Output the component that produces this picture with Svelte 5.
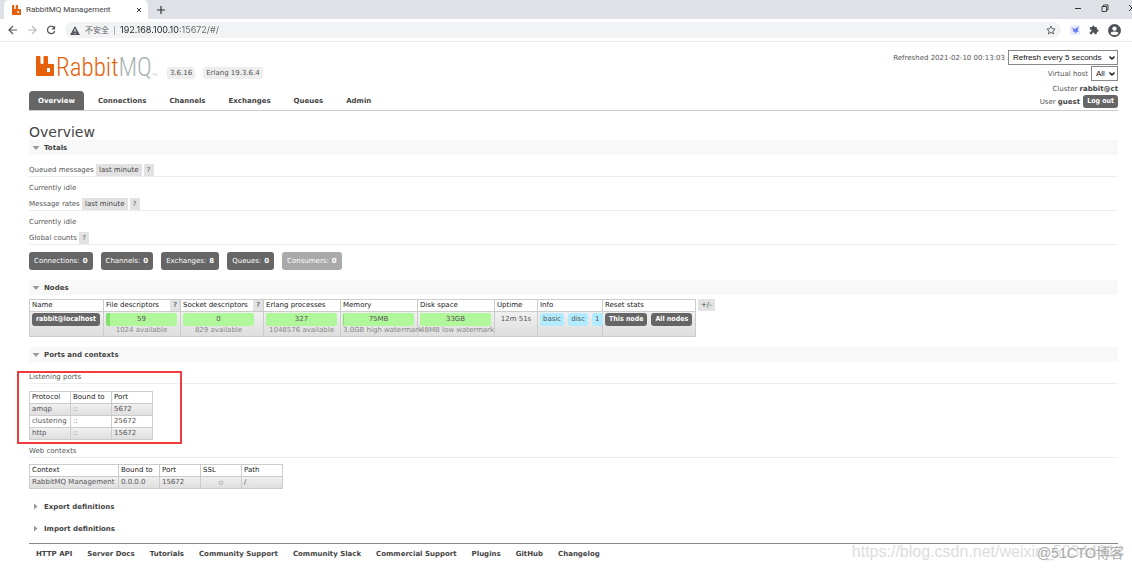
<script lang="ts">
	const navItems = ['Overview', 'Connections', 'Channels', 'Exchanges', 'Queues', 'Admin'];
	const footerLinks = ['HTTP API', 'Server Docs', 'Tutorials', 'Community Support', 'Community Slack', 'Commercial Support', 'Plugins', 'GitHub', 'Changelog'];

	const counts = [
		{ label: 'Connections', value: 0 },
		{ label: 'Channels', value: 0 },
		{ label: 'Exchanges', value: 8 },
		{ label: 'Queues', value: 0 },
		{ label: 'Consumers', value: 0, disabled: true }
	];

	const gauges = [
		{ value: '59', note: '1024 available', used: 6 },
		{ value: '0', note: '829 available', used: 0 },
		{ value: '327', note: '1048576 available', used: 0 },
		{ value: '75MB', note: '3.0GB high watermark', used: 2 },
		{ value: '33GB', note: '48MB low watermark', used: 0 }
	];

	const ports = [
		{ protocol: 'amqp', bound: '::', port: 5672 },
		{ protocol: 'clustering', bound: '::', port: 25672 },
		{ protocol: 'http', bound: '::', port: 15672 }
	];

	let url = $state('192.168.100.10:15672/#/');
	let activeTab = $state('Overview');
	let open = $state({ totals: true, nodes: true, ports: true, exportDefs: false, importDefs: false });
</script>

{#snippet rabbit(cls: string)}
	<svg class={cls} viewBox="0 0 18 20" aria-hidden="true">
		<path fill="#e6600a" d="M0 1q0-1 1-1h2.500q1 0 1 1v6q0 1 1 1h1q1 0 1-1V1q0-1 1-1h2.500q1 0 1 1v6q0 1 1 1h4q1 0 1 1v10q0 1-1 1H1q-1 0-1-1zM11 12v4h3v-4z" fill-rule="evenodd" />
	</svg>
{/snippet}

{#snippet sectionHead(key: keyof typeof open, title: string)}
	<h2 class:closed={!open[key]}>
		<button aria-expanded={open[key]} onclick={() => (open[key] = !open[key])}>
			<svg width="8" height="8" viewBox="0 0 8 8" aria-hidden="true">
				<path fill="#999" d={open[key] ? 'M.5 2h7L4 6z' : 'M2 .5v6L5.500 3.500z'} />
			</svg>
			{title}
		</button>
	</h2>
{/snippet}

<div class="browser">
	<div class="tabstrip">
		<div class="tab">
			{@render rabbit('favicon')}
			<span class="tab-title">RabbitMQ Management</span>
			<button class="icon" aria-label="Close tab">
				<svg width="6" height="6" viewBox="0 0 6 6" stroke="#333" fill="none"><path d="M1 1l4 4M5 1L1 5" /></svg>
			</button>
		</div>
		<button class="icon new-tab" aria-label="New tab">
			<svg width="8" height="8" viewBox="0 0 8 8" stroke="#333" stroke-width="1.2" fill="none"><path d="M4 0v8M0 4h8" /></svg>
		</button>
		<div class="window-buttons">
			<button class="icon" aria-label="Minimize">
				<svg width="8" height="8" viewBox="0 0 8 8" stroke="#333" fill="none"><path d="M1 4.5h6" /></svg>
			</button>
			<button class="icon" aria-label="Restore">
				<svg width="8" height="8" viewBox="0 0 8 8" stroke="#333" stroke-width=".9" fill="none"><path d="M1 2.5h4.5v5H1zM2.5 2.5V1H7v5H5.5" /></svg>
			</button>
			<button class="icon" aria-label="Close">
				<svg width="8" height="8" viewBox="0 0 8 8" stroke="#333" fill="none"><path d="M1 1l6 6M7 1L1 7" /></svg>
			</button>
		</div>
	</div>

	<div class="toolbar">
		<button class="icon" aria-label="Back">
			<svg width="10" height="10" viewBox="0 0 10 10" stroke="#55585c" stroke-width="1.2" fill="none"><path d="M9 5H1.500M5 1L1 5l4 4" /></svg>
		</button>
		<button class="icon" aria-label="Forward">
			<svg width="10" height="10" viewBox="0 0 10 10" stroke="#bbb" stroke-width="1.2" fill="none"><path d="M1 5h7.500M5 1l4 4-4 4" /></svg>
		</button>
		<button class="icon" aria-label="Reload">
			<svg width="10" height="10" viewBox="0 0 10 10" fill="none"><path stroke="#55585c" stroke-width="1.3" d="M8 2.500A3.700 3.700 0 1 0 8.700 6" /><path fill="#55585c" d="M9.200.6v3.800H5.400z" /></svg>
		</button>
		<div class="address">
			<svg width="10" height="9" viewBox="0 0 10 9" aria-hidden="true"><path fill="#55585c" d="M5 0l5 9H0z" /><path stroke="#fff" d="M5 3v3M5 7v1" /></svg>
			<label for="url">不安全</label>
			<span class="bar"></span>
			<input id="url" type="text" spellcheck="false" bind:value={url} />
			<button class="icon" aria-label="Bookmark this page">
				<svg width="10" height="10" viewBox="0 0 24 24" fill="none" stroke="#55585c" stroke-width="2.200"><path d="M12 2.500l2.900 6.500 7 .7-5.300 4.700 1.600 6.900L12 17.700l-6.200 3.600 1.600-6.900L2.100 9.700l7-.7z" /></svg>
			</button>
		</div>
		<button class="icon" aria-label="Extension">
			<svg width="10" height="10" viewBox="0 0 10 10"><rect width="10" height="10" rx="1" fill="#e9ebff" /><path fill="#6c7df0" d="M1.500 2.500l3.500 1.500L8.500 1.500 7.800 5.500l1 1-2 .5L5.500 8.500 4.500 6.800 2.500 6.200 3.500 5z" /></svg>
		</button>
		<button class="icon" aria-label="Extensions">
			<svg width="10" height="10" viewBox="0 0 24 24"><path fill="#4d5156" d="M20.500 11H19V7c0-1.100-.9-2-2-2h-4V3.500a2.500 2.500 0 0 0-5 0V5H4c-1.100 0-2 .9-2 2v3.800h1.500a2.700 2.700 0 0 1 0 5.400H2V20c0 1.100.9 2 2 2h3.800v-1.500a2.700 2.700 0 0 1 5.400 0V22H17c1.100 0 2-.9 2-2v-4h1.500a2.500 2.500 0 0 0 0-5z" /></svg>
		</button>
		<button class="icon" aria-label="Profile">
			<svg width="13" height="13" viewBox="0 0 24 24"><circle cx="12" cy="12" r="12" fill="#4d5156" /><circle cx="12" cy="8.500" r="4" fill="#fff" /><path fill="#fff" d="M4.500 17.500c0-5 15-5 15 0-3.500 4-11.500 4-15 0z" /></svg>
		</button>
	</div>
</div>

<div class="page">
	<header>
		<div class="left">
			<div class="brand">
				<a class="logo" href="#/" aria-label="RabbitMQ">
					{@render rabbit('logo-mark')}
					<span>Rabbit<i>MQ</i><small>TM</small></span>
				</a>
				<span class="version">3.6.16</span>
				<span class="version">Erlang 19.3.6.4</span>
			</div>
			<nav>
				{#each navItems as item}
					<a href="#/{item.toLowerCase()}" class:selected={activeTab === item} onclick={() => (activeTab = item)}>{item}</a>
				{/each}
			</nav>
		</div>

		<div class="status">
			<div class="row tall">
				<label for="refresh">Refreshed 2021-02-10 00:13:03</label>
				<span class="select wide">
					<select id="refresh"><option>Refresh every 5 seconds</option><option>Refresh every 30 seconds</option><option>Do not refresh</option></select>
					<svg width="6" height="4" viewBox="0 0 6 4" fill="none" stroke="#111" stroke-width="1.400"><path d="M.5.5L3 3 5.500.5" /></svg>
				</span>
			</div>
			<div class="row tall">
				<label for="vhost">Virtual host</label>
				<span class="select">
					<select id="vhost"><option>All</option><option>/</option></select>
					<svg width="6" height="4" viewBox="0 0 6 4" fill="none" stroke="#111" stroke-width="1.400"><path d="M.5.5L3 3 5.500.5" /></svg>
				</span>
			</div>
			<div class="row"><span>Cluster <b>rabbit@ct</b></span></div>
			<div class="row">
				<span>User <b>guest</b></span>
				<button class="dark">Log out</button>
			</div>
		</div>
	</header>

	<main>
		<h1>Overview</h1>

		<section>
			{@render sectionHead('totals', 'Totals')}
			{#if open.totals}
				<div class="body">
					<h3>Queued messages <button class="chip range">last minute</button> <button class="chip">?</button></h3>
					<p>Currently idle</p>
					<h3>Message rates <button class="chip range">last minute</button> <button class="chip">?</button></h3>
					<p>Currently idle</p>
					<h3>Global counts <button class="chip">?</button></h3>
					<div class="counts">
						{#each counts as c}
							<a href="#/{c.label.toLowerCase()}" class:disabled={c.disabled}>{c.label}: <b>{c.value}</b></a>
						{/each}
					</div>
				</div>
			{/if}
		</section>

		<section>
			{@render sectionHead('nodes', 'Nodes')}
			{#if open.nodes}
				<div class="nodes">
					<table class="node-table">
						<colgroup>
							<col class="name" /><col class="gauge" /><col class="socket" /><col class="gauge" /><col class="gauge" /><col class="gauge" /><col class="uptime" /><col class="info" /><col class="reset" />
						</colgroup>
						<thead>
							<tr>
								<th>Name</th>
								<th><span class="split">File descriptors <button class="chip">?</button></span></th>
								<th><span class="split">Socket descriptors <button class="chip">?</button></span></th>
								<th>Erlang processes</th>
								<th>Memory</th>
								<th>Disk space</th>
								<th>Uptime</th>
								<th>Info</th>
								<th>Reset stats</th>
							</tr>
						</thead>
						<tbody>
							<tr>
								<td><a class="dark" href="#/nodes/rabbit">rabbit@localhost</a></td>
								{#each gauges as g}
									<td>
										<div class="meter"><div class="used" style="width: {g.used}%"></div><span>{g.value}</span></div>
										<div class="note">{g.note}</div>
									</td>
								{/each}
								<td class="center">12m 51s</td>
								<td><div class="group"><abbr>basic</abbr><abbr>disc</abbr><abbr>1</abbr></div></td>
								<td><div class="group"><button class="dark">This node</button><button class="dark">All nodes</button></div></td>
							</tr>
						</tbody>
					</table>
					<button class="chip columns">+/-</button>
				</div>
			{/if}
		</section>

		<section>
			{@render sectionHead('ports', 'Ports and contexts')}
			{#if open.ports}
				<div class="body">
					<div class="marked">
						<h3>Listening ports</h3>
						<table class="ports">
							<colgroup><col /><col /><col /></colgroup>
							<thead><tr><th>Protocol</th><th>Bound to</th><th>Port</th></tr></thead>
							<tbody>
								{#each ports as p}
									<tr><td>{p.protocol}</td><td>{p.bound}</td><td>{p.port}</td></tr>
								{/each}
							</tbody>
						</table>
						<div class="highlight"></div>
					</div>
					<h3>Web contexts</h3>
					<table class="contexts">
						<colgroup><col class="context" /><col /><col /><col /><col /></colgroup>
						<thead><tr><th>Context</th><th>Bound to</th><th>Port</th><th>SSL</th><th>Path</th></tr></thead>
						<tbody><tr><td>RabbitMQ Management</td><td>0.0.0.0</td><td>15672</td><td class="center ssl">○</td><td>/</td></tr></tbody>
					</table>
				</div>
			{/if}
		</section>

		<section class="folded">{@render sectionHead('exportDefs', 'Export definitions')}</section>
		<section class="folded">{@render sectionHead('importDefs', 'Import definitions')}</section>
	</main>

	<footer>
		{#each footerLinks as link}
			<a href="#/">{link}</a>
		{/each}
	</footer>
</div>

<div class="watermark blog">https://blog.csdn.net/weixin_50344814</div>
<div class="watermark cto">@51CTO博客</div>

<style>
	:global(body) { background: #fff; color: #555; font: 7px/12px 'DejaVu Sans', Verdana, 'Noto Sans CJK SC', sans-serif; overflow: hidden; }
	button, input, select { font: inherit; color: inherit; margin: 0; padding: 0; border: 0; background: none; }
	button { cursor: pointer; }
	a { color: inherit; text-decoration: none; }
	svg { display: block; flex: none; }
	h1, h2, h3, p { margin: 0; font-weight: normal; }
	b { color: #444; }

	/* browser chrome */
	.browser { font-family: 'Open Sans', 'Noto Sans CJK SC', sans-serif; font-size: 8px; }
	.icon { display: flex; }
	.tabstrip { display: flex; align-items: center; height: 19px; background: #dee1e6; padding-left: 4px; }
	.tab { display: flex; align-items: center; box-sizing: border-box; width: 144px; height: 19px; padding: 0 6px 0 8px; background: #fff; border-radius: 5px 5px 0 0; }
	.tab :global(.favicon) { width: 9px; height: 10px; }
	.tab-title { flex: 1; margin-left: 5px; color: #444; font-family: Roboto, sans-serif; }
	.new-tab { margin-left: 9px; }
	.window-buttons { display: flex; gap: 19px; margin: -4px -4px 0 auto; }
	.toolbar { display: flex; align-items: center; gap: 9px; height: 22px; padding: 0 11px 0 8px; border-bottom: 1px solid #e8eaed; }
	.address { flex: 1; display: flex; align-items: center; gap: 5px; height: 16px; padding: 0 5px; border-radius: 8px; background: #f1f3f4; }
	.address label { color: #5f6368; }
	.address .bar { width: 1px; height: 9px; background: #aaa; }
	.address input { flex: 1; font-family: Inter, sans-serif; font-size: 9px; color: transparent; background: linear-gradient(90deg, #222 60px, #666 60px); background-clip: text; outline: none; }

	/* header */
	.page { padding: 8px 14px 0 29px; }
	header { display: flex; justify-content: space-between; border-bottom: 1px solid #ccc; }
	.left { display: flex; flex-direction: column; justify-content: space-between; }
	.brand { display: flex; align-items: flex-end; gap: 8px; padding: 0 0 0 7px; height: 29px; }
	.logo { display: flex; align-items: baseline; color: #e6600a; font: 25px/20px 'Liberation Sans Narrow', 'Roboto Condensed', Roboto, sans-serif; font-weight: 300; margin: 0 2px -6px 0; }
	.logo :global(.logo-mark) { width: 18px; height: 20px; margin-right: 2px; }
	.logo i { font-style: normal; color: #aab5b1; }
	.logo small { font-size: 4px; color: #aab5b1; }
	.version { padding: 0 3px; border-radius: 3px; background: #eee; }
	nav { display: flex; }
	nav a { padding: 4px 9px 3px; margin-right: 5px; font-weight: bold; color: #444; line-height: 12px; border-radius: 4px 4px 0 0; }
	nav a.selected { background: #666; color: #fff; }
	.status { display: flex; flex-direction: column; align-items: flex-end; padding-bottom: 2px; }
	.row { display: flex; align-items: center; gap: 3px; height: 13px; }
	.row.tall { height: 15px; margin-bottom: 1px; }
	.select { display: grid; align-items: center; }
	.select select { grid-area: 1 / 1; appearance: none; box-sizing: border-box; width: 27px; height: 15px; padding-left: 4px; border: 1px solid #888; color: #111; font: 8px 'Liberation Sans', sans-serif; background: #fff; }
	.select.wide select { width: 110px; }
	.select svg { grid-area: 1 / 1; justify-self: end; margin-right: 3px; pointer-events: none; }
	.dark { display: inline-block; padding: 0 4px; border-radius: 3px; background: #666; color: #fff; font-family: 'DejaVu Sans Condensed', 'DejaVu Sans', sans-serif; font-weight: bold; line-height: 13px; white-space: nowrap; }

	/* sections */
	h1 { margin-top: 13px; color: #444; font-size: 14px; line-height: 16px; }
	h2 { background: #f8f8f8; font-size: 7px; }
	h2 button { display: flex; align-items: center; gap: 4px; width: 100%; height: 15px; padding-left: 3px; font-weight: bold; color: #444; }
	h2.closed { background: none; }
	h3 { height: 12px; border-bottom: 1px solid #eee; font-size: 7px; }
	p { margin: 5px 0 4px; }
	section { margin-bottom: 10px; }
	.body { padding-top: 9px; }
	.chip { padding: 0 3px; background: #e2e2e2; line-height: 12px; }
	.chip.range { color: #444; }
	.counts { display: flex; gap: 8px; margin-top: 7px; }
	.counts a { display: flex; gap: 3px; padding: 3px 5px; border-radius: 3px; background: #666; color: #fff; }
	.counts b { color: #fff; }
	.counts a.disabled { background: #aaa; }

	/* tables */
	table { width: 0; table-layout: fixed; border-collapse: collapse; }
	col { width: 41px; }
	th, td { padding: 0 2px; border: 1px solid #ccc; height: 11px; line-height: 11px; text-align: left; font-weight: normal; white-space: nowrap; }
	th { color: #222; }
	tbody tr:nth-child(odd) { background: linear-gradient(#f0f0f0, #ddd); }
	.center { text-align: center; }
	.ssl { font-size: 5px; }
	.nodes { display: flex; align-items: flex-start; gap: 2px; margin-top: 4px; }
	.node-table col.name { width: 74px; }
	.node-table col.gauge { width: 77px; }
	.node-table col.socket { width: 83px; }
	.node-table col.uptime { width: 43px; }
	.node-table col.info { width: 65px; }
	.node-table col.reset { width: 93px; }
	.node-table td { height: 22px; padding-top: 1px; padding-bottom: 1px; vertical-align: top; line-height: 13px; }
	.split { display: flex; justify-content: space-between; margin-right: -2px; }
	.split .chip { line-height: 11px; }
	.columns { color: #444; }
	.meter { display: grid; width: 71px; height: 13px; border-radius: 2px; overflow: hidden; background: #b0f69a; }
	.meter > * { grid-area: 1 / 1; text-align: center; }
	.used { background: #82e06c; }
	.note { width: 71px; color: #888; line-height: 9px; text-align: center; }
	.group { display: flex; gap: 4px; }
	abbr { padding: 0 3px; border-radius: 3px; background: #b0ebff; }
	.ports { margin-top: 7px; }
	.contexts { margin-top: 6px; }
	.contexts col.context { width: 89px; }
	.marked { position: relative; margin-bottom: 5px; }
	.highlight { position: absolute; top: 0; left: -12px; width: 161px; height: 69px; border: 2px solid #f03c3c; pointer-events: none; }
	.folded { margin-bottom: 7px; }

	footer { display: flex; gap: 15px; padding: 4px 7px; border-top: 1px solid #888; font-weight: bold; color: #444; }

	.watermark { position: absolute; white-space: nowrap; pointer-events: none; }
	.blog { right: 8px; bottom: 8px; color: #ddd; font: 16px/20px 'Liberation Sans', sans-serif; }
	.cto { right: 8px; bottom: 7px; color: #aaa; font: 14px/20px 'Liberation Sans', 'Noto Sans CJK SC', sans-serif; }
</style>
